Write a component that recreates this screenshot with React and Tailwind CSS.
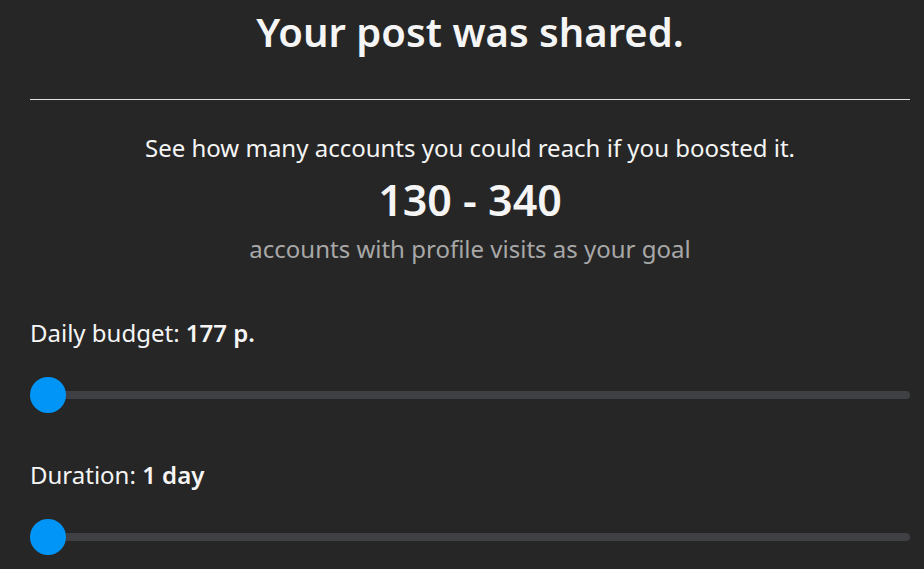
import React, { useState } from 'react';

function Slider({ value }) {
  return (
    <div className="relative h-9 w-full flex items-center">
      <div className="ml-[18px] h-2 flex-1 rounded-full bg-[#3f4043]" />
      <div
        className="absolute top-0 h-9 w-9 rounded-full bg-[#0095f6]"
        style={{ left: `${value}%` }}
      />
    </div>
  );
}

export default function App() {
  const [budget] = useState(177);
  const [days] = useState(1);

  return (
    <div className="h-[569px] w-full overflow-hidden bg-[#262626] text-[#f5f5f5] font-['Noto_Sans','Open_Sans',sans-serif]">
      <div className="pl-[30px] pr-[14px]">
        {/* --- Header --- */}
        <h1 className="pt-[4px] text-center text-[40px] font-semibold leading-[56px]">
          Your post was shared.
        </h1>
        <div className="mt-[39px] h-px bg-[#e0e0e0]" />

        {/* --- Estimated reach --- */}
        <div className="mt-[32px] flex flex-col items-center text-center">
          <p className="text-[24px] leading-[32px]">
            See how many accounts you could reach if you boosted it.
          </p>
          <p className="mt-[11px] text-[43px] font-semibold leading-[50px]">130 - 340</p>
          <p className="mt-[8px] text-[24px] leading-[32px] text-[#a8a8a8]">
            accounts with profile visits as your goal
          </p>
        </div>

        {/* --- Budget --- */}
        <div className="mt-[52px]">
          <p className="text-[24px] leading-[32px]">
            Daily budget: <span className="font-semibold">{budget} p.</span>
          </p>
          <div className="mt-[28px]">
            <Slider value={0} />
          </div>
        </div>

        {/* --- Duration --- */}
        <div className="mt-[46px]">
          <p className="text-[24px] leading-[32px]">
            Duration: <span className="font-semibold">{days} day</span>
          </p>
          <div className="mt-[28px]">
            <Slider value={0} />
          </div>
        </div>
      </div>
    </div>
  );
}
